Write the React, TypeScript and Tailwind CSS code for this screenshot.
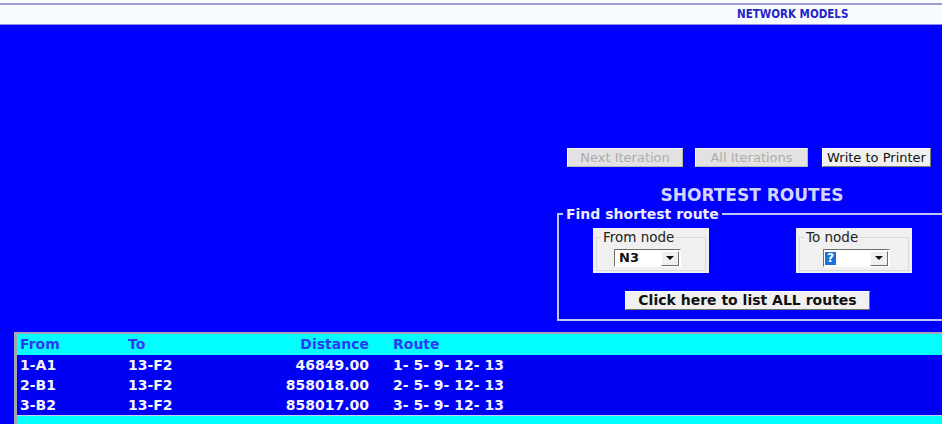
import React from 'react';

interface RouteRow {
  from: string;
  to: string;
  distance: string;
  route: string;
}

const routes: RouteRow[] = [
  { from: '1-A1', to: '13-F2', distance: '46849.00', route: '1- 5- 9- 12- 13' },
  { from: '2-B1', to: '13-F2', distance: '858018.00', route: '2- 5- 9- 12- 13' },
  { from: '3-B2', to: '13-F2', distance: '858017.00', route: '3- 5- 9- 12- 13' },
];

const sans = "font-['DejaVu_Sans',sans-serif]";

function ClassicButton({
  label,
  disabled,
  className = '',
}: {
  label: string;
  disabled?: boolean;
  className?: string;
}) {
  return (
    <div
      className={`flex h-[19px] items-center justify-center border border-t-white border-l-white ${
        disabled
          ? 'border-r-[#b8b8b8] border-b-[#b8b8b8] bg-[#e2e2e2] text-[#adadad]'
          : 'border-r-[#7a7a7a] border-b-[#7a7a7a] bg-[#f0f0f0] text-[#111]'
      } ${className}`}
    >
      {label}
    </div>
  );
}

function DropArrow() {
  return (
    <div className="flex h-[15px] w-[18px] items-center justify-center border border-t-white border-l-white border-r-[#707070] border-b-[#707070] bg-[#f0f0f0]">
      <svg width="8" height="4" viewBox="0 0 8 4">
        <path d="M0 0h8L4 4z" fill="#111" />
      </svg>
    </div>
  );
}

function NodePicker({
  label,
  children,
  comboClass,
}: {
  label: string;
  children: React.ReactNode;
  comboClass: string;
}) {
  return (
    <div className="h-[45px] w-[116px] bg-[#f0f0f0] px-[3px] pt-[2px]">
      <fieldset className="h-[41px] border border-[#dadada]">
        <legend className="ml-[4px] px-[2px] text-[13.5px] leading-[14px] text-[#222]">{label}</legend>
        <div
          className={`mt-[5px] flex h-[18px] w-[67px] items-center justify-between border border-t-[#6e6e6e] border-l-[#6e6e6e] border-r-white border-b-white bg-white pr-[1px] ${comboClass}`}
        >
          {children}
          <DropArrow />
        </div>
      </fieldset>
    </div>
  );
}

export default function App() {
  return (
    <div className={`h-[424px] w-[942px] overflow-hidden ${sans}`}>
      {/* title strip */}
      <div className="bg-[#f8fbfe]">
        <div className="h-[3px]" />
        <div className="h-[2px] bg-[#9c9cd6]" />
        <div className="flex h-[19px] items-center pl-[737px] pt-[1px] font-['Liberation_Sans_Narrow','DejaVu_Sans_Condensed',sans-serif] text-[11.5px] font-bold text-[#2424c8]">
          NETWORK MODELS
        </div>
        <div className="h-px bg-[#8a8af2]" />
      </div>

      <div className="flex h-[399px] flex-col bg-[#0000ff]">
        <div className="pl-[557px] pt-[123px]">
          <div className="flex pl-[10px] text-[13px]">
            <ClassicButton label="Next Iteration" disabled className="w-[116px]" />
            <ClassicButton label="All Iterations" disabled className="ml-[12px] w-[113px]" />
            <ClassicButton label="Write to Printer" className="ml-[14px] w-[109px]" />
          </div>

          <div className="mt-[20px] w-[390px] text-center text-[17px] font-bold leading-[17px] text-[#d4d4ff]">
            SHORTEST ROUTES
          </div>

          <fieldset className="mt-[3px] h-[114px] w-[420px] border-2 border-[#c4c4f4]">
            <legend className="ml-[4px] px-[3px] text-[14px] font-bold leading-[14px] text-[#ececff]">
              Find shortest route
            </legend>
            <div className="flex pl-[34px] pt-[7px]">
              <NodePicker label="From node" comboClass="ml-[17px]">
                <span className="pl-[4px] text-[13px] font-bold text-[#111]">N3</span>
              </NodePicker>
              <div className="ml-[87px]">
                <NodePicker label="To node" comboClass="ml-[23px]">
                  <span className="ml-[1px] flex h-[13px] w-[11px] items-center justify-center bg-[#1a74d8] text-[12px] font-bold text-white">
                    ?
                  </span>
                  <span className="flex-1" />
                </NodePicker>
              </div>
            </div>
            <div className="ml-[66px] mt-[18px] flex h-[19px] w-[245px] items-center justify-center border border-t-white border-l-white border-r-[#707070] border-b-[#707070] bg-[#f0f0f0] text-[14px] font-bold text-[#111]">
              Click here to list ALL routes
            </div>
          </fieldset>
        </div>

        {/* results grid */}
        <div className="ml-[14px] mt-[11px] flex-1 border-l-[3px] border-t-2 border-[#a4a4b4] bg-[#00ffff] text-[14px] font-bold">
          <div className="grid h-[21px] grid-cols-[108px_152px_89px_1fr] items-center pl-[3px] text-[#2a3cf4]">
            <span>From</span>
            <span>To</span>
            <span className="text-right">Distance</span>
            <span className="pl-[24px]">Route</span>
          </div>
          {routes.map((r) => (
            <div
              key={r.from}
              className="grid h-[20px] grid-cols-[108px_152px_89px_1fr] items-center bg-[#0000f4] pl-[3px] text-[#f4f4ff]"
            >
              <span>{r.from}</span>
              <span>{r.to}</span>
              <span className="text-right">{r.distance}</span>
              <span className="pl-[24px] whitespace-pre">{r.route}</span>
            </div>
          ))}
          <div className="h-px bg-[#c8c8f0]" />
        </div>
      </div>
    </div>
  );
}
